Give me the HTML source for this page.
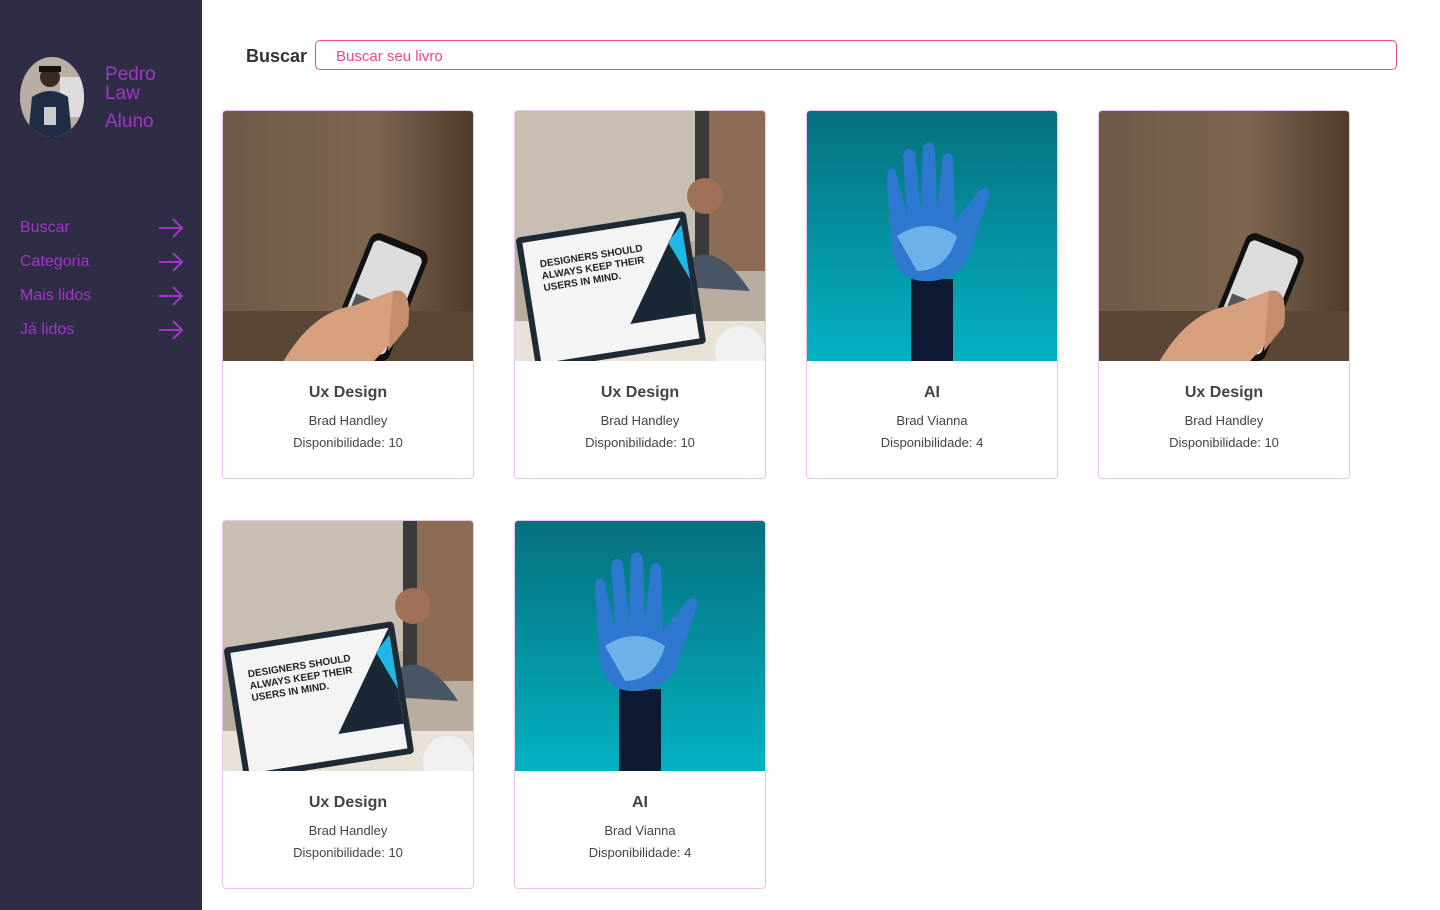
<!DOCTYPE html>
<html><head><meta charset="utf-8">
<style>
*{margin:0;padding:0;box-sizing:border-box}
body{width:1440px;height:910px;overflow:hidden;background:#fff;font-family:"Liberation Sans",Arial,sans-serif;position:relative}
.side{position:absolute;left:0;top:0;width:202px;height:910px;background:#2e2d45}
.avatar{position:absolute;left:20px;top:57px;width:64px;height:80px;border-radius:50%;overflow:hidden;background:#a09890}
.name{position:absolute;left:105px;top:65px;color:#a236c8;font-size:19px;line-height:19px}
.role{position:absolute;left:105px;top:111px;color:#a236c8;font-size:19px}
.nav{position:absolute;left:20px;width:164px;color:#a236c8;font-size:16px;height:20px}
.nav svg{position:absolute;right:0;top:-1px}
.lbl{position:absolute;left:246px;top:46px;font-size:18px;font-weight:bold;color:#333}
.search{position:absolute;left:315px;top:40px;width:1082px;height:30px;border:1px solid #f0478f;border-radius:5px;color:#f0478f;font-size:15px;padding:7px 0 0 20px}
.card{position:absolute;width:252px;height:369px;border:1px solid #ecc4ef;border-radius:4px;overflow:hidden;background:#fff;text-align:center}
.card svg{display:block}
.t{margin-top:23px;font-size:16px;font-weight:bold;color:#444}
.a{margin-top:11px;font-size:13px;color:#444}
.d{margin-top:7px;font-size:13px;color:#444}
</style></head><body>
<div class="side">
 <div class="avatar"><svg width="64" height="80"><rect width="64" height="80" fill="#b9aea4"/><rect x="40" y="20" width="24" height="40" fill="#ddd"/><circle cx="30" cy="20" r="10" fill="#3a2a22"/><rect x="19" y="9" width="22" height="6" fill="#111"/><path d="M8 80 L12 40 Q30 28 48 40 L52 80Z" fill="#1f2c45"/><rect x="24" y="50" width="12" height="18" fill="#ccc"/></svg></div>
 <div class="name">Pedro<br>Law</div>
 <div class="role">Aluno</div>
 <div class="nav" style="top:219px">Buscar<svg width="26" height="20"><path d="M1 10H24M15 1L24 10L15 19" stroke="#a236c8" stroke-width="2" fill="none"/></svg></div>
 <div class="nav" style="top:253px">Categoria<svg width="26" height="20"><path d="M1 10H24M15 1L24 10L15 19" stroke="#a236c8" stroke-width="2" fill="none"/></svg></div>
 <div class="nav" style="top:287px">Mais lidos<svg width="26" height="20"><path d="M1 10H24M15 1L24 10L15 19" stroke="#a236c8" stroke-width="2" fill="none"/></svg></div>
 <div class="nav" style="top:321px">Já lidos<svg width="26" height="20"><path d="M1 10H24M15 1L24 10L15 19" stroke="#a236c8" stroke-width="2" fill="none"/></svg></div>
</div>
<div class="lbl">Buscar</div>
<div class="search">Buscar seu livro</div>

<div class="card" style="left:222px;top:110px">
<svg width="250" height="250"><defs><linearGradient id="pb" x1="0" x2="1"><stop offset="0" stop-color="#6e5a45"/><stop offset=".6" stop-color="#7d6650"/><stop offset="1" stop-color="#4e3b2c"/></linearGradient></defs><rect width="250" height="251" fill="url(#pb)"/><rect x="0" y="200" width="250" height="51" fill="#5a4634"/><g transform="rotate(22 150 200)"><rect x="120" y="125" width="62" height="120" rx="10" fill="#111"/><rect x="125" y="132" width="52" height="106" rx="6" fill="#dcdcdc"/><rect x="128" y="190" width="44" height="40" fill="#555"/></g><path d="M60 251 Q90 200 130 195 L170 180 Q185 200 170 230 L150 251Z" fill="#d6a07e"/><path d="M170 180 Q190 175 185 215 L165 240Z" fill="#c48e6c"/></svg>
<div class="t">Ux Design</div><div class="a">Brad Handley</div><div class="d">Disponibilidade: 10</div></div>

<div class="card" style="left:514px;top:110px">
<svg width="250" height="250"><rect width="250" height="251" fill="#b8ad9e"/><rect x="0" y="0" width="180" height="130" fill="#c8bfb2"/><rect x="190" y="0" width="60" height="160" fill="#8c6c55"/><rect x="180" y="0" width="14" height="170" fill="#3a3a3a"/><circle cx="190" cy="85" r="18" fill="#a07058"/><path d="M150 175 Q190 110 235 180Z" fill="#4a5566"/><rect x="0" y="210" width="250" height="41" fill="#e8e2d8"/><g transform="rotate(-9 100 180)"><rect x="10" y="112" width="172" height="134" rx="4" fill="#1e2a36"/><rect x="16" y="118" width="160" height="122" fill="#f4f4f4"/><path d="M176 118 L176 215 L110 215Z" fill="#1a2735"/><path d="M176 125 L176 180 L160 140Z" fill="#1fb6e8"/><text x="30" y="145" font-size="10" font-weight="bold" fill="#222" font-family="Liberation Sans">DESIGNERS SHOULD</text><text x="30" y="157" font-size="10" font-weight="bold" fill="#222" font-family="Liberation Sans">ALWAYS KEEP THEIR</text><text x="30" y="169" font-size="10" font-weight="bold" fill="#222" font-family="Liberation Sans">USERS IN MIND.</text></g><circle cx="225" cy="240" r="25" fill="#f1f1f1"/></svg>
<div class="t">Ux Design</div><div class="a">Brad Handley</div><div class="d">Disponibilidade: 10</div></div>

<div class="card" style="left:806px;top:110px">
<svg width="250" height="250"><defs><linearGradient id="ab" x1="0" y1="0" x2="0" y2="1"><stop offset="0" stop-color="#06707e"/><stop offset="1" stop-color="#03b2c2"/></linearGradient></defs><rect width="250" height="251" fill="url(#ab)"/><rect x="104" y="168" width="42" height="83" fill="#0e1a33"/><path d="M85 140 L80 70 Q80 55 88 58 L100 105 L96 45 Q100 32 108 42 L114 100 L116 35 Q124 26 128 38 L130 100 L136 45 Q142 38 146 46 L148 110 L172 80 Q184 72 182 86 L160 150 Q145 172 115 170 Q90 168 85 140Z" fill="#2e78d0"/><path d="M90 125 Q120 105 150 125 Q140 160 110 160Z" fill="#6eb0e8"/></svg>
<div class="t">AI</div><div class="a">Brad Vianna</div><div class="d">Disponibilidade: 4</div></div>

<div class="card" style="left:1098px;top:110px">
<svg width="250" height="250"><rect width="250" height="251" fill="url(#pb)"/><rect x="0" y="200" width="250" height="51" fill="#5a4634"/><g transform="rotate(22 150 200)"><rect x="120" y="125" width="62" height="120" rx="10" fill="#111"/><rect x="125" y="132" width="52" height="106" rx="6" fill="#dcdcdc"/><rect x="128" y="190" width="44" height="40" fill="#555"/></g><path d="M60 251 Q90 200 130 195 L170 180 Q185 200 170 230 L150 251Z" fill="#d6a07e"/><path d="M170 180 Q190 175 185 215 L165 240Z" fill="#c48e6c"/></svg>
<div class="t">Ux Design</div><div class="a">Brad Handley</div><div class="d">Disponibilidade: 10</div></div>

<div class="card" style="left:222px;top:520px">
<svg width="250" height="250"><rect width="250" height="251" fill="#b8ad9e"/><rect x="0" y="0" width="180" height="130" fill="#c8bfb2"/><rect x="190" y="0" width="60" height="160" fill="#8c6c55"/><rect x="180" y="0" width="14" height="170" fill="#3a3a3a"/><circle cx="190" cy="85" r="18" fill="#a07058"/><path d="M150 175 Q190 110 235 180Z" fill="#4a5566"/><rect x="0" y="210" width="250" height="41" fill="#e8e2d8"/><g transform="rotate(-9 100 180)"><rect x="10" y="112" width="172" height="134" rx="4" fill="#1e2a36"/><rect x="16" y="118" width="160" height="122" fill="#f4f4f4"/><path d="M176 118 L176 215 L110 215Z" fill="#1a2735"/><path d="M176 125 L176 180 L160 140Z" fill="#1fb6e8"/><text x="30" y="145" font-size="10" font-weight="bold" fill="#222" font-family="Liberation Sans">DESIGNERS SHOULD</text><text x="30" y="157" font-size="10" font-weight="bold" fill="#222" font-family="Liberation Sans">ALWAYS KEEP THEIR</text><text x="30" y="169" font-size="10" font-weight="bold" fill="#222" font-family="Liberation Sans">USERS IN MIND.</text></g><circle cx="225" cy="240" r="25" fill="#f1f1f1"/></svg>
<div class="t">Ux Design</div><div class="a">Brad Handley</div><div class="d">Disponibilidade: 10</div></div>

<div class="card" style="left:514px;top:520px">
<svg width="250" height="250"><rect width="250" height="251" fill="url(#ab)"/><rect x="104" y="168" width="42" height="83" fill="#0e1a33"/><path d="M85 140 L80 70 Q80 55 88 58 L100 105 L96 45 Q100 32 108 42 L114 100 L116 35 Q124 26 128 38 L130 100 L136 45 Q142 38 146 46 L148 110 L172 80 Q184 72 182 86 L160 150 Q145 172 115 170 Q90 168 85 140Z" fill="#2e78d0"/><path d="M90 125 Q120 105 150 125 Q140 160 110 160Z" fill="#6eb0e8"/></svg>
<div class="t">AI</div><div class="a">Brad Vianna</div><div class="d">Disponibilidade: 4</div></div>
</body></html>
